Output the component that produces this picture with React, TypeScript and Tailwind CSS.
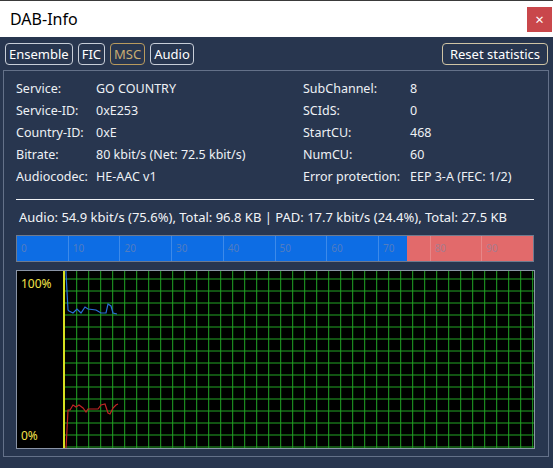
import React from 'react';

const font = { fontFamily: '"Noto Sans", "Open Sans", sans-serif' };

const left = [
  ['Service:', 'GO COUNTRY'],
  ['Service-ID:', '0xE253'],
  ['Country-ID:', '0xE'],
  ['Bitrate:', '80 kbit/s (Net: 72.5 kbit/s)'],
  ['Audiocodec:', 'HE-AAC v1'],
];

const right = [
  ['SubChannel:', '8'],
  ['SCIdS:', '0'],
  ['StartCU:', '468'],
  ['NumCU:', '60'],
  ['Error protection:', 'EEP 3-A (FEC: 1/2)'],
];

const blueTrace = [
  [1, 0], [1, 2], [3, 39], [4, 40], [8, 42], [12, 38], [16, 42], [20, 36], [23, 38],
  [31, 39], [36, 42], [41, 42], [43, 33], [46, 35], [48, 42], [52, 43],
];

const redTrace = [
  [1, 178], [3, 139], [5, 139], [8, 134], [11, 136], [14, 134], [18, 137], [21, 141],
  [23, 138], [33, 138], [36, 134], [40, 133], [43, 142], [45, 143], [48, 137], [51, 134], [53, 133],
];

function Tab({ label, active }: { label: string; active?: boolean }) {
  return (
    <div
      className={`h-[22px] px-[3px] flex items-center rounded-[4px] border text-[13px] leading-none ${
        active ? 'border-[#b89a5e] text-[#c9ad72]' : 'border-[#c8ced8] text-white'
      }`}
    >
      {label}
    </div>
  );
}

function InfoColumn({ rows, labelWidth }: { rows: string[][]; labelWidth: string }) {
  return (
    <div className="flex flex-col">
      {rows.map(([k, v]) => (
        <div key={k} className="flex h-[22px] items-center text-[12.5px] text-[#eef1f5]">
          <span className={labelWidth}>{k}</span>
          <span>{v}</span>
        </div>
      ))}
    </div>
  );
}

function UsageBar() {
  const ticks = ['0', '10', '20', '30', '40', '50', '60', '70', '80', '90'];
  return (
    <div className="mt-[8px] h-[27px] w-[518px] border border-[#6f7b8f] flex bg-[linear-gradient(to_right,#0d6de4_75.6%,#e26a6b_75.6%)]">
      {ticks.map((t, i) => (
        <div
          key={t}
          className={`flex-1 flex items-center pl-[4px] text-[10px] text-[#8088a8]/60 ${i > 0 ? 'border-l border-white/20' : ''}`}
        >
          {t}
        </div>
      ))}
    </div>
  );
}

function Graph() {
  const w = 469;
  const h = 177;
  const vlines: number[] = [];
  for (let x = 11.7; x < w - 1; x += 12) vlines.push(x);
  const hlines: number[] = [];
  for (let y = 8; y < h; y += 12) hlines.push(y);
  return (
    <div className="mt-[8px] h-[179px] w-[519px] border border-[#8a94a6] bg-black flex">
      <div className="w-[46px] flex flex-col justify-between pl-[4px] pt-[4px] pb-[3px] text-[12px] text-[#f2e34a]">
        <span>100%</span>
        <span>0%</span>
      </div>
      <div className="w-[2px] bg-[#d8e020]" />
      <svg width={w} height={h} className="block">
        {vlines.map((x) => (
          <line key={`v${x}`} x1={x} y1={0} x2={x} y2={h} stroke="#22a525" strokeWidth={1} />
        ))}
        {hlines.map((y) => (
          <line key={`h${y}`} x1={0} y1={y} x2={w} y2={y} stroke="#22a525" strokeWidth={1} />
        ))}
        <polyline
          points={blueTrace.map((p) => p.join(',')).join(' ')}
          fill="none"
          stroke="#2a6fd8"
          strokeWidth={1.2}
        />
        <polyline
          points={redTrace.map((p) => p.join(',')).join(' ')}
          fill="none"
          stroke="#c42424"
          strokeWidth={1.2}
        />
      </svg>
    </div>
  );
}

export default function App() {
  return (
    <div className="w-[553px] h-[468px] bg-[#28364f] flex flex-col overflow-hidden" style={font}>
      <div className="h-[37px] bg-white border-t border-[#3a3a3a] flex items-center justify-between pl-[10px] pr-[1px]">
        <span className="text-[16px] text-black">DAB-Info</span>
        <div className="w-[25px] h-[25px] bg-[#c9474b] flex items-center justify-center text-white text-[15px] leading-none">
          ×
        </div>
      </div>

      <div className="mt-[6px] px-[5px] flex items-center">
        <div className="flex gap-[5px]">
          <Tab label="Ensemble" />
          <Tab label="FIC" />
          <Tab label="MSC" active />
          <Tab label="Audio" />
        </div>
        <div className="ml-auto h-[22px] px-[7px] flex items-center rounded-[4px] border border-[#cfc4a4] text-white text-[13px] leading-none">
          Reset statistics
        </div>
      </div>

      <div className="mt-[5px] ml-[3px] w-[546px] h-[387px] border border-[#647189] pl-[12px] pt-[7px]">
        <div className="flex">
          <div className="w-[287px]">
            <InfoColumn rows={left} labelWidth="w-[80px]" />
          </div>
          <InfoColumn rows={right} labelWidth="w-[107px]" />
        </div>
        <div className="mt-[11px] h-[1px] w-[518px] bg-[#f0f2f5]" />
        <div className="mt-[9px] pl-[3px] h-[18px] flex items-center text-[13px] text-[#f2f4f7]">
          Audio: 54.9 kbit/s (75.6%), Total: 96.8 KB | PAD: 17.7 kbit/s (24.4%), Total: 27.5 KB
        </div>
        <UsageBar />
        <Graph />
      </div>
    </div>
  );
}
